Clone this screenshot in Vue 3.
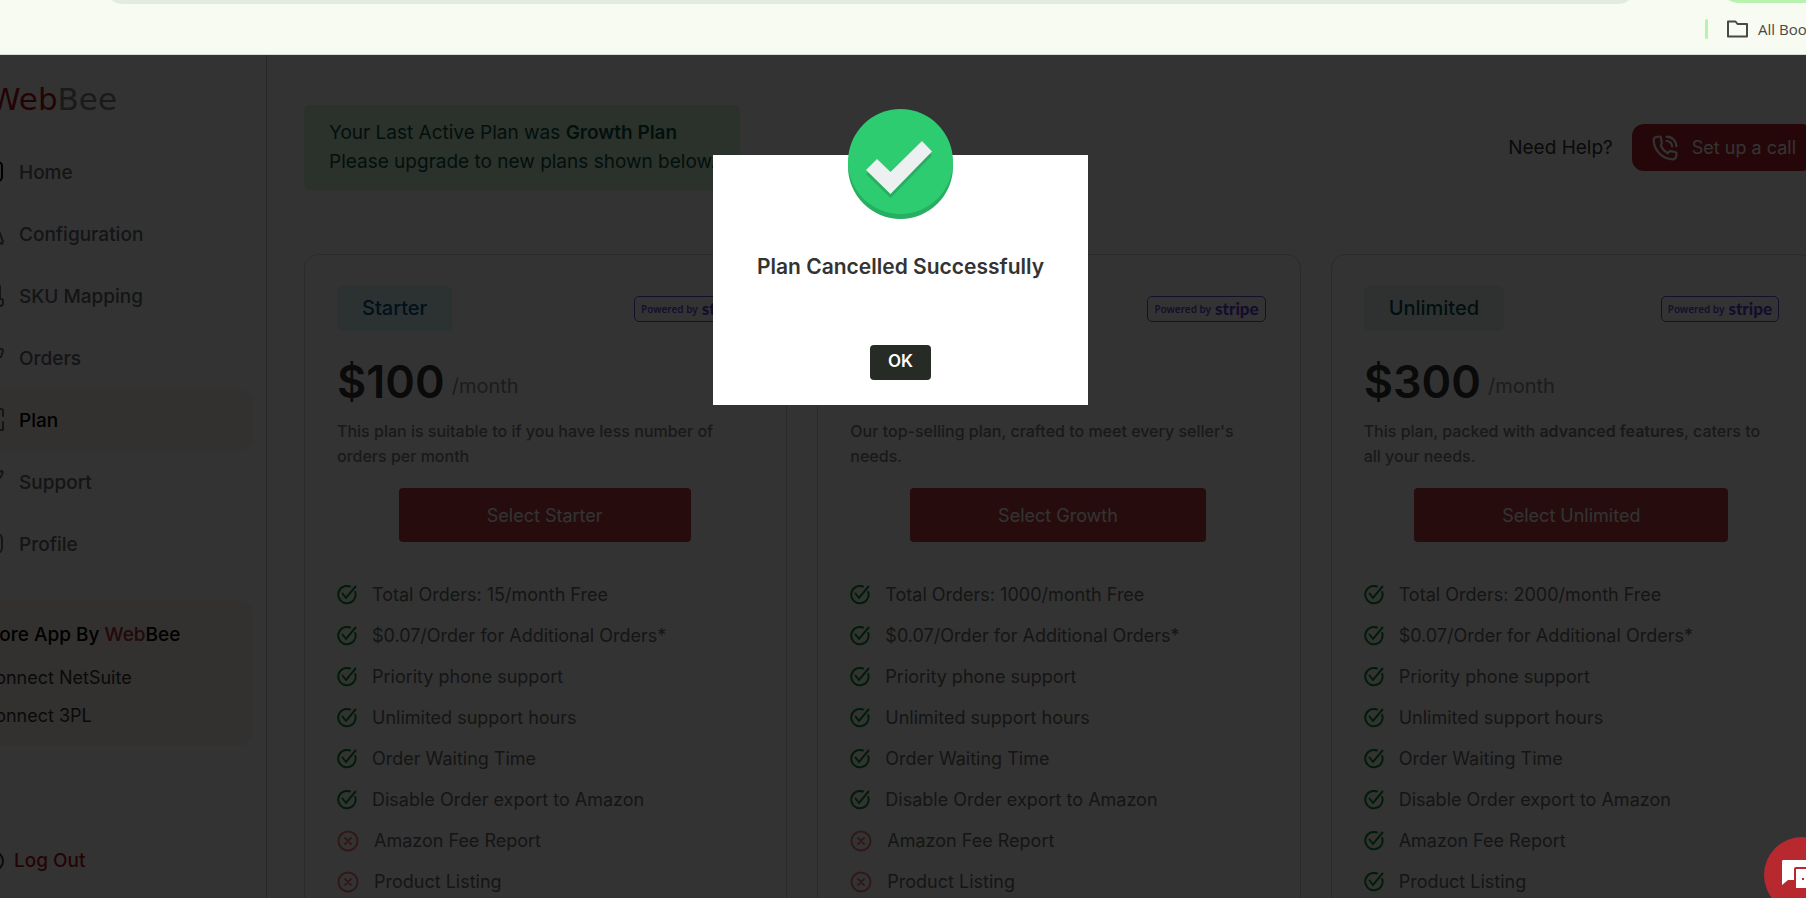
<script setup>
const nav = [
  { label: 'Home', icon: 'home' },
  { label: 'Configuration', icon: 'config' },
  { label: 'SKU Mapping', icon: 'mapping' },
  { label: 'Orders', icon: 'cart' },
  { label: 'Plan', icon: 'plan', active: true },
  { label: 'Support', icon: 'support' },
  { label: 'Profile', icon: 'profile' }
]

const features = (orders, full) => [
  { text: `Total Orders: ${orders}/month Free`, on: true },
  { text: '$0.07/Order for Additional Orders*', on: true },
  { text: 'Priority phone support', on: true },
  { text: 'Unlimited support hours', on: true },
  { text: 'Order Waiting Time', on: true },
  { text: 'Disable Order export to Amazon', on: true },
  { text: 'Amazon Fee Report', on: full },
  { text: 'Product Listing', on: full }
]

const plans = [
  { name: 'Starter', tone: 'blue', price: '$100', desc: ['This plan is suitable to if you have less number of orders per month'], features: features(15, false) },
  { name: 'Growth', tone: 'green', price: '$200', desc: ["Our top-selling plan, crafted to meet every seller's needs."], features: features(1000, false) },
  { name: 'Unlimited', tone: 'teal', price: '$300', desc: ['This plan, packed with ', 'advanced features', ', caters to all your needs.'], features: features(2000, true) }
]
</script>

<template>
  <div class="window">
    <header class="browser">
      <div class="address"></div>
      <div class="chip"></div>
      <div class="bookmarks">
        <span class="divider"></span>
        <button class="folder" type="button">
          <svg width="21" height="18" viewBox="0 0 21 18" fill="none" stroke="#454a43" stroke-width="2" stroke-linejoin="round">
            <path d="M1 1.500h7.500l2 2.500H20v12.500H1z" />
          </svg>
          <span>All Bookmarks</span>
        </button>
      </div>
    </header>

    <div class="viewport">
      <div class="page">
        <aside class="sidebar">
          <div class="logo"><span class="logo-red">Web</span>Bee</div>
          <nav>
            <a v-for="n in nav" :key="n.label" href="#" :class="['nav-item', { active: n.active }]">
              <svg width="26" height="26" viewBox="0 0 26 26" fill="none" stroke="currentColor" stroke-width="2" stroke-linecap="round" stroke-linejoin="round">
                <path v-if="n.icon === 'home'" class="ink" d="M7 3h13a4 4 0 0 1 4 4v11a4 4 0 0 1-4 4H7a4 4 0 0 1-4-4V7a4 4 0 0 1 4-4zM10 22v-7h7v7" />
                <path v-else-if="n.icon === 'config'" d="M4 7h10M21 2v6M22 12l3 9M4 20h12M19 20l5 3 1-3" />
                <path v-else-if="n.icon === 'mapping'" d="M22 3v12M13 10H5v6M3 17h5v5H3zM21 16h2a2 2 0 0 1 2 2v2a3 3 0 0 1-3 3h-3v-5a2 2 0 0 1 2-2z" />
                <path v-else-if="n.icon === 'cart'" d="M1 3h4l3 13h12M6 4h17a2 2 0 0 1 2 2l-2 6H8M10 21h1M18 21h1" />
                <path v-else-if="n.icon === 'plan'" d="M3 9V3h7M19 2h4a2 2 0 0 1 2 2v5M25 15v8h-5M10 24H3v-6M9 13h9" />
                <path v-else-if="n.icon === 'support'" d="M3 22l12-12M15 10c-1-5 3-8 6-7l3-1c1 1 1 4-4 9" />
                <path v-else d="M8 3h11a5 5 0 0 1 5 5v9a5 5 0 0 1-5 5H8a5 5 0 0 1-5-5V8a5 5 0 0 1 5-5zM8 19c2-5 8-5 10 0M10 10a3 3 0 1 0 6 0 3 3 0 1 0-6 0" />
              </svg>
              <span>{{ n.label }}</span>
            </a>
          </nav>
          <section class="more">
            <h2>More App By <span>Web</span>Bee</h2>
            <a href="#">Connect NetSuite</a>
            <a href="#">Connect 3PL</a>
          </section>
          <a class="logout" href="#">
            <svg width="22" height="22" viewBox="0 0 22 22" fill="none" stroke="#333" stroke-width="2" stroke-linecap="round">
              <circle cx="12" cy="11" r="9" /><path d="M8 11h8M13 8l3 3-3 3" />
            </svg>
            <span>Log Out</span>
          </a>
        </aside>

        <main>
          <div class="top">
            <p class="banner">Your Last Active Plan was <strong>Growth Plan</strong><br />Please upgrade to new plans shown below.</p>
            <div class="help">
              <span>Need Help?</span>
              <button class="call" type="button">
                <svg width="26" height="26" viewBox="0 0 24 24" fill="none" stroke="currentColor" stroke-width="2" stroke-linecap="round" stroke-linejoin="round">
                  <path d="M13.500 1.500a9 9 0 0 1 9 9M13.500 5.500a5 5 0 0 1 5 5" />
                  <path d="M9 7.300 8.300 2.600a1.500 1.500 0 0 0-1.800-1.200l-2.600.5A3 3 0 0 0 1.500 5c.6 9.500 8 17 17.500 17.500a3 3 0 0 0 3.200-2.400l.4-2.600a1.500 1.500 0 0 0-1.200-1.800l-4.200-.8a1.500 1.500 0 0 0-1.500.6l-1 1.500a15 15 0 0 1-6.400-6.800z" />
                </svg>
                <span>Set up a call</span>
              </button>
            </div>
          </div>

          <div class="plans">
            <article v-for="p in plans" :key="p.name" class="plan">
              <div class="plan-head">
                <h3 :class="['tag', p.tone]">{{ p.name }}</h3>
                <span class="stripe">Powered by <b>stripe</b></span>
              </div>
              <div class="price"><strong>{{ p.price }}</strong><span>/month</span></div>
              <p class="desc">{{ p.desc[0] }}<b v-if="p.desc[1]">{{ p.desc[1] }}</b>{{ p.desc[2] }}</p>
              <button class="select" type="button">Select {{ p.name }}</button>
              <ul>
                <li v-for="f in p.features" :key="f.text">
                  <svg v-if="f.on" class="ok" width="20" height="20" viewBox="0 0 20 20" fill="none" stroke-width="2" stroke-linecap="round">
                    <path d="M13 1.500A8.700 8.700 0 1 0 18.200 7" />
                    <path d="M5.500 8.500 9 13 18.500 1.500" />
                  </svg>
                  <svg v-else class="no" width="22" height="22" viewBox="0 0 22 22" fill="none" stroke-width="2" stroke-linecap="round">
                    <circle cx="11" cy="11" r="9.500" /><path d="M8 8l6 6M14 8l-6 6" />
                  </svg>
                  <span>{{ f.text }}</span>
                </li>
              </ul>
            </article>
          </div>
        </main>
      </div>

      <div class="overlay">
        <div class="modal" role="dialog" aria-modal="true" aria-labelledby="modal-title">
          <svg class="badge" width="105" height="110" viewBox="0 0 105 110">
            <circle cx="52.500" cy="57.500" r="52.500" fill="#27ae60" />
            <circle cx="52.500" cy="52.500" r="52.500" fill="#2ecc71" />
            <path d="M18 65 29 54l13.500 13.500L74 36l10 10.500L42.500 89z" fill="#27ae60" />
            <path d="M18 61 29 50l13.500 13L74 32l10 10.500L42.500 85z" fill="#ecf0f1" />
          </svg>
          <h1 id="modal-title">Plan Cancelled Successfully</h1>
          <button type="button">OK</button>
        </div>
      </div>

      <button class="chat" type="button" aria-label="Chat">
        <svg width="40" height="30" viewBox="0 0 40 30">
          <path d="M1 0h28v20H6l-6 5V1z" fill="#fff" />
          <path d="M14 8h24v21H14a1 1 0 0 1-1-1V9a1 1 0 0 1 1-1z" fill="#fff" stroke="#b8292f" stroke-width="2" stroke-linejoin="round" />
          <path d="M20 19h2M26 19h2M32 19h2" stroke="#b8292f" stroke-width="2" />
        </svg>
      </button>
    </div>
  </div>
</template>

<style>
html, body, #app { height: 100%; }
body { margin: 0; overflow: hidden; }
</style>

<style scoped>
* { box-sizing: border-box; }
.window { height: 100%; display: flex; flex-direction: column; font-family: Inter, "Liberation Sans", sans-serif; overflow: hidden; }
button { font: inherit; border: 0; cursor: pointer; }
a { text-decoration: none; color: inherit; }
h1, h2, h3, p, ul { margin: 0; padding: 0; font-weight: 500; }

.browser { position: relative; flex: none; height: 55px; background: #f8fbf1; border-bottom: 1px solid #d5ddd0; display: flex; align-items: center; justify-content: flex-end; overflow: hidden; }
.address { position: absolute; left: 105px; right: 170px; top: -32px; height: 36px; border-radius: 18px; background: #e3ebe0; }
.chip { position: absolute; right: -24px; width: 108px; top: -29px; height: 32px; border-radius: 16px; background: #b7f2ae; }
.bookmarks { display: flex; align-items: center; gap: 19px; margin: 4px -52px 0 0; }
.divider { width: 3px; height: 20px; border-radius: 2px; background: #b7f2ae; }
.folder { display: flex; align-items: center; gap: 10px; padding: 0; background: none; color: #454a43; font: 15px "Open Sans", "Noto Sans", sans-serif; white-space: nowrap; }

.viewport { position: relative; flex: 1; min-height: 0; overflow: hidden; background: #fff; }
.page { display: flex; align-items: flex-start; margin: 0 -46px 0 -51px; }
.sidebar { flex: none; width: 318px; height: 100vh; border-right: 1px solid #c8c8c8; padding: 26px 13px 0 25px; display: flex; flex-direction: column; }
.logo { font: 31px/36px "DejaVu Sans", sans-serif; padding-left: 16px; color: #828282; margin-bottom: 24px; }
.logo-red { color: #b4101c; }
.nav-item { display: flex; align-items: center; gap: 15px; height: 62px; padding-left: 4px; border-radius: 14px; font-size: 19px; font-weight: 500; color: #63686d; }
.nav-item.active { background: #f7f2ea; }
.nav-item.active span { color: #000; }
.ink { stroke: #000; }
.more { background: #f7f2ea; border-radius: 14px; margin-top: 25px; padding: 20px 0 11px 8px; display: flex; flex-direction: column; font-size: 18px; line-height: 38px; color: #333; }
.more h2 { font-size: 19px; line-height: 30px; color: #000; padding-bottom: 9px; }
.more h2 span { color: #b8292f; }
.logout { display: flex; align-items: center; gap: 10px; margin-top: 103px; padding-left: 8px; font-size: 19px; font-weight: 500; color: #b41420; }

main { flex: 1; min-width: 0; padding: 50px 38px 0 37px; }
.top { display: flex; justify-content: space-between; align-items: center; margin-bottom: 64px; }
.banner { padding: 13px 24px 14px 25px; background: #d7f5d7; border-radius: 5px; font-size: 19px; line-height: 29px; font-weight: 400; color: #0a5048; }
.banner strong { font-weight: 600; }
.help { display: flex; align-items: center; gap: 19px; font-size: 19px; font-weight: 400; color: #333; }
.call { display: flex; align-items: center; gap: 14px; height: 47px; padding: 0 18px 0 20px; border-radius: 12px; background: #b92030; color: #fff; font-size: 18px; }

.plans { display: grid; grid-template-columns: repeat(3, 1fr); gap: 30px; }
.plan { border: 1px solid #d0d0d0; border-radius: 14px; padding: 31px 34px 40px 32px; display: flex; flex-direction: column; }
.plan-head { display: flex; justify-content: space-between; align-items: center; }
.tag { padding: 0 25px; font-size: 20px; line-height: 45px; border-radius: 5px; }
.blue { background: #dcf5f9; color: #00508c; }
.green { background: #e2f7e2; color: #0a5048; }
.teal { background: #ebf6f5; color: #005050; }
.stripe { display: flex; align-items: center; gap: 4px; height: 26px; padding: 0 6px; border: 1px solid #6450dc; border-radius: 5px; color: #6450dc; font: 600 10px "Noto Sans", sans-serif; white-space: nowrap; }
.stripe b { font: 900 17px/22px Lato, sans-serif; color: #5a46d7; }
.price { display: flex; align-items: flex-end; gap: 7px; margin-top: 22px; height: 58px; line-height: 58px; }
.price strong { font-size: 45px; font-weight: 600; color: #333; }
.price span { font-size: 20px; line-height: 50px; color: #8c8c8c; }
.desc { margin-top: 8px; font-size: 16px; line-height: 25px; font-weight: 500; color: #7d7d7d; }
.desc b { font-weight: 600; }
.select { align-self: center; margin-top: 19px; height: 54px; padding: 0 88px; border-radius: 4px; background: #be3c41; color: #fff; font-size: 18px; white-space: nowrap; }
ul { list-style: none; margin-top: 32px; }
li { display: flex; align-items: center; gap: 15px; height: 41px; font-size: 18px; font-weight: 400; color: #696969; }
.ok { stroke: #088a28; }
.no { stroke: #f0787a; }

.overlay { position: absolute; inset: 0 -46px 0 -51px; background: rgba(0, 0, 0, 0.8); display: flex; justify-content: center; align-items: flex-start; padding-top: 100px; }
.modal { position: relative; width: 375px; height: 250px; background: #fff; display: flex; flex-direction: column; align-items: center; justify-content: space-between; padding: 96px 0 25px; }
.badge { position: absolute; top: -46px; left: 135px; }
.modal h1 { font-size: 21px; line-height: 32px; font-weight: 600; color: #333; }
.modal button { height: 35px; padding: 0 18px 4px; border-radius: 4px; background: #272b26; color: #fff; font-size: 17px; font-weight: 600; }
.chat { position: absolute; right: -34px; bottom: -15px; width: 76px; height: 76px; border-radius: 50%; background: #b8292f; padding: 0; display: flex; align-items: center; justify-content: center; }
</style>
